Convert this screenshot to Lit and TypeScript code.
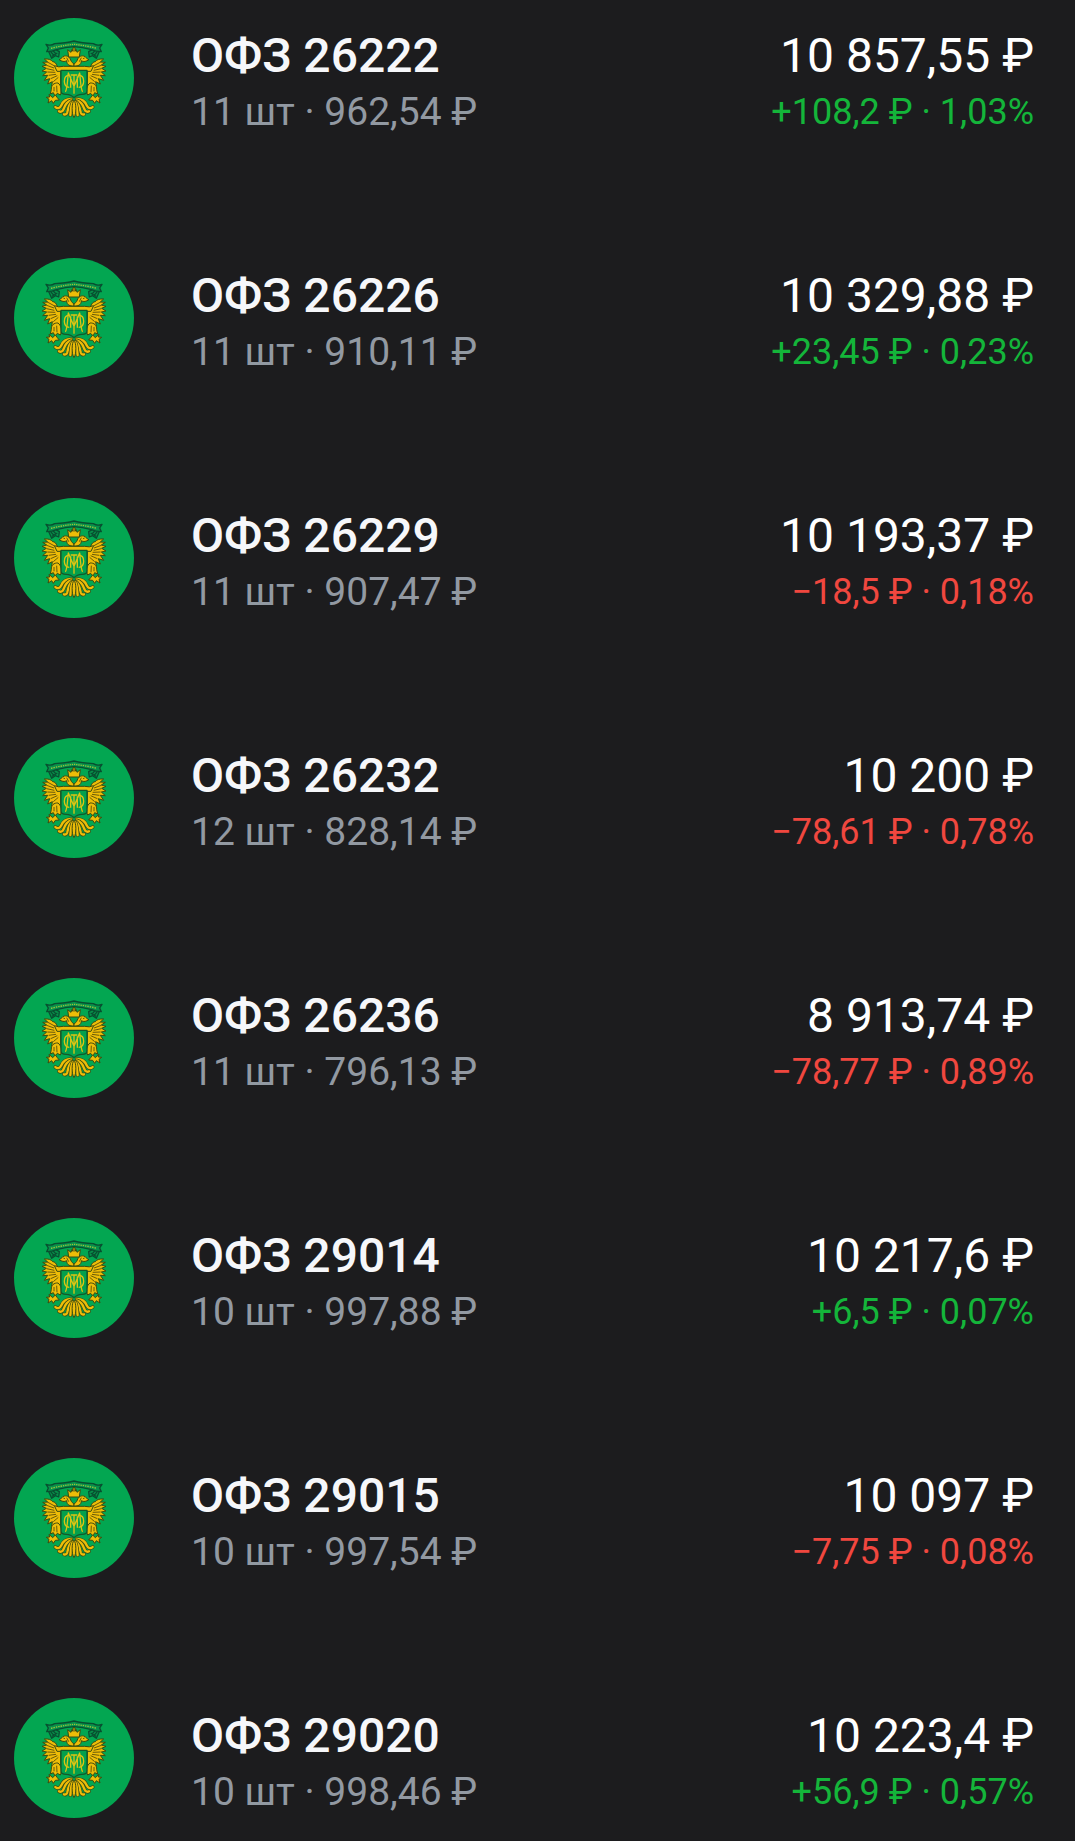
import { css, html, svg, LitElement } from "lit";
import { customElement, property } from "lit/decorators.js";

interface Bond {
	name: string;
	details: string;
	total: string;
	change: string;
	up: boolean;
}

const bonds: Bond[] = [
	{ name: "ОФЗ 26222", details: "11 шт · 962,54 ₽", total: "10 857,55 ₽", change: "+108,2 ₽ · 1,03%", up: true },
	{ name: "ОФЗ 26226", details: "11 шт · 910,11 ₽", total: "10 329,88 ₽", change: "+23,45 ₽ · 0,23%", up: true },
	{ name: "ОФЗ 26229", details: "11 шт · 907,47 ₽", total: "10 193,37 ₽", change: "−18,5 ₽ · 0,18%", up: false },
	{ name: "ОФЗ 26232", details: "12 шт · 828,14 ₽", total: "10 200 ₽", change: "−78,61 ₽ · 0,78%", up: false },
	{ name: "ОФЗ 26236", details: "11 шт · 796,13 ₽", total: "8 913,74 ₽", change: "−78,77 ₽ · 0,89%", up: false },
	{ name: "ОФЗ 29014", details: "10 шт · 997,88 ₽", total: "10 217,6 ₽", change: "+6,5 ₽ · 0,07%", up: true },
	{ name: "ОФЗ 29015", details: "10 шт · 997,54 ₽", total: "10 097 ₽", change: "−7,75 ₽ · 0,08%", up: false },
	{ name: "ОФЗ 29020", details: "10 шт · 998,46 ₽", total: "10 223,4 ₽", change: "+56,9 ₽ · 0,57%", up: true },
];

const tailFeathers = [
	"M-8 192 C-24 192 -34 200 -38 211 C-42 220 -50 222 -56 216",
	"M-8 196 C-22 200 -28 212 -31 222 C-34 230 -40 232 -45 229",
	"M-6 200 C-16 208 -18 222 -20 232 C-22 238 -26 240 -30 238",
	"M-4 202 C-10 214 -9 228 -11 240",
];

// left half of the eagle, mirrored for the right one
const half = svg`
	<path class="ribbon" d="M-77 47 L-67 70 L-56 62 L-46 66 L-44 50 L-56 43 Z" />
	<path class="fold" d="M-70 50 L-60 62 M-62 48 L-53 58 M-66 64 L-50 54" />
	<path class="gold" d="M-50 94 C-54 84 -58 80 -64 80 C-68 74 -76 71 -89 72 L-79 81 L-94 82 L-82 90 L-96 94 L-83 100 L-96 108 L-82 111 L-94 122 L-79 121 L-89 136 L-73 131 L-79 147 L-65 140 L-67 154 L-54 148 L-40 150 L-40 106 Z" />
	<path class="ink" d="M-80 81 L-60 92 M-82 91 L-60 99 M-82 101 L-59 106 M-80 111 L-56 112 M-76 121 L-54 118 M-70 131 L-50 122 M-62 140 L-47 127" />
	<path class="gold" d="M-12 92 C-20 89 -22 83 -22 77 C-29 82 -37 79 -45 74 C-37 73 -38 65 -29 63 C-20 61 -12 67 -10 75 C-7 82 -4 84 0 87 V94 Z" />
	<path class="ink" d="M-32 69 L-27 71 M-22 68 L-16 80" />
	<path class="gold" d="M-48 144 C-60 143 -69 151 -68 163 L-71 177 L-62 173 L-57 183 L-50 175 L-41 180 C-35 166 -38 152 -48 144 Z" />
	<path class="ink" d="M-60 156 L-60 169 M-52 152 L-51 172" />
	<path class="gold" d="M-56 180 L-64 188 L-75 178 L-73 186 L-83 187 L-75 193 L-78 204 L-67 197 L-62 205 L-56 196 L-44 195 L-50 188 Z" />
	${tailFeathers.map((d) => svg`
		<path class="feather-edge" d=${d} />
		<path class="feather" d=${d} />
	`)}
`;

@customElement("bond-emblem")
export class BondEmblemElement extends LitElement {
	render() {
		return html`
		<svg viewBox="0 0 360 360" aria-hidden="true">
			<circle cx="180" cy="180" r="180" fill="#03a651" />
			<g transform="translate(180 51)">
				<g>${half}</g>
				<g transform="scale(-1 1)">${half}</g>
				<path class="ribbon" d="M-84 28 Q-70 34 -58 26 Q-24 24 0 18 Q24 24 58 26 Q70 34 84 28 L77 39 L82 50 Q64 50 53 44 Q24 37 0 35 Q-24 37 -53 44 Q-64 50 -82 50 L-77 39 Z" />
				<path class="motto" d="M-69 40 Q-32 31 0 28 Q32 31 69 40" />
				<path class="gold" d="M-16 66 L-19 44 L-9 52 L-6 43 L-3 49 L-3 38 H3 L3 49 L6 43 L9 52 L19 44 L16 66 Z" />
				<path class="gold" d="M-59 92 Q-46 98 -32 94 H32 Q46 98 59 92 L51 109 H-51 Z" />
				<path class="shield" d="M-39 106 H39 V168 Q39 178 24 178 Q8 179 0 188 Q-8 179 -24 178 Q-39 178 -39 168 Z" />
				<path class="monogram" d="M-14 120 C-34 122 -34 155 -14 157 M14 120 C34 122 34 155 14 157" />
				<path class="monogram" d="M-26 170 C-20 165 -19 128 -17 114 L0 154 L17 114 C19 128 20 165 26 170 M-10 120 H10 M0 120 V176 M-10 124 V158 M10 124 V158" />
				<path class="gold" d="M0 196 C-7 203 -8 236 0 248 C8 236 7 203 0 196 Z" />
			</g>
		</svg>
		`;
	}

	static styles = css`
	:host {
		display: block;
	}

	svg {
		display: block;
		width: 100%;
		height: 100%;
	}

	path {
		stroke-linejoin: round;
	}

	.gold {
		fill: #eebd08;
		stroke: #3c4a10;
		stroke-width: 3;
	}

	.ribbon {
		fill: #07914a;
		stroke: #084f30;
		stroke-width: 4;
	}

	.fold {
		fill: none;
		stroke: #084f30;
		stroke-width: 4;
	}

	.ink {
		fill: none;
		stroke: #695a0b;
		stroke-width: 3;
	}

	.feather-edge {
		fill: none;
		stroke: #3c4a10;
		stroke-width: 11;
		stroke-linecap: round;
	}

	.feather {
		fill: none;
		stroke: #eebd08;
		stroke-width: 7;
		stroke-linecap: round;
	}

	.motto {
		fill: none;
		stroke: #9fc33a;
		stroke-width: 4;
		stroke-dasharray: 4 3;
	}

	.shield {
		fill: #03a04d;
		stroke: #12592c;
		stroke-width: 4;
	}

	.monogram {
		fill: none;
		stroke: #dcc413;
		stroke-width: 4;
	}
	`
}

@customElement("bond-row")
export class BondRowElement extends LitElement {
	@property({attribute: false}) bond!: Bond;

	render() {
		return html`
		<bond-emblem></bond-emblem>
		<div class="text">
			<div class="name">${this.bond.name}</div>
			<div class="details">${this.bond.details}</div>
		</div>
		<div class="text sums">
			<div class="total">${this.bond.total}</div>
			<div class="change ${this.bond.up ? "up" : "down"}">${this.bond.change}</div>
		</div>
		`;
	}

	static styles = css`
	:host {
		display: flex;
		align-items: flex-start;
	}

	bond-emblem {
		flex: none;
		width: 120px;
		height: 120px;
		margin-right: 57px;
	}

	.text {
		padding-top: 10px;
		line-height: 56px;
		white-space: nowrap;
	}

	.sums {
		margin-left: auto;
		text-align: right;
	}

	.name {
		color: #f6f7fa;
		font-size: 48px;
		font-weight: 500;
	}

	.details {
		color: #9299a2;
		font-size: 39px;
	}

	.total {
		color: #ffffff;
		font-size: 48px;
	}

	.change {
		font-size: 36px;
	}

	.up {
		color: #14b53a;
	}

	.down {
		color: #f0473f;
	}
	`
}

@customElement("app-root")
export class AppRootElement extends LitElement {
	render() {
		return html`
		<ul>
			${bonds.map((bond) => html`<li><bond-row .bond=${bond}></bond-row></li>`)}
		</ul>
		`;
	}

	static styles = css`
	:host {
		display: block;
		box-sizing: border-box;
		min-height: 100vh;
		padding: 18px 41px 19px 14px;
		background-color: #1c1c1e;
		font-family: Roboto, "Noto Sans", sans-serif;
	}

	ul {
		display: grid;
		row-gap: 118px;
		margin: 0;
		padding: 0;
		list-style: none;
	}
	`
}
